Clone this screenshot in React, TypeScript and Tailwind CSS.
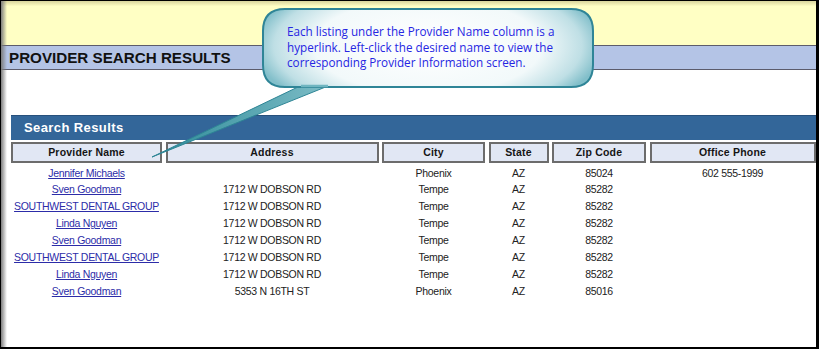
const rows = [
  { name: 'Jennifer Michaels', address: '', city: 'Phoenix', state: 'AZ', zip: '85024', phone: '602 555-1999' },
  { name: 'Sven Goodman', address: '1712 W DOBSON RD', city: 'Tempe', state: 'AZ', zip: '85282', phone: '' },
  { name: 'SOUTHWEST DENTAL GROUP', address: '1712 W DOBSON RD', city: 'Tempe', state: 'AZ', zip: '85282', phone: '' },
  { name: 'Linda Nguyen', address: '1712 W DOBSON RD', city: 'Tempe', state: 'AZ', zip: '85282', phone: '' },
  { name: 'Sven Goodman', address: '1712 W DOBSON RD', city: 'Tempe', state: 'AZ', zip: '85282', phone: '' },
  { name: 'SOUTHWEST DENTAL GROUP', address: '1712 W DOBSON RD', city: 'Tempe', state: 'AZ', zip: '85282', phone: '' },
  { name: 'Linda Nguyen', address: '1712 W DOBSON RD', city: 'Tempe', state: 'AZ', zip: '85282', phone: '' },
  { name: 'Sven Goodman', address: '5353 N 16TH ST', city: 'Phoenix', state: 'AZ', zip: '85016', phone: '' },
]

const headers = ['Provider Name', 'Address', 'City', 'State', 'Zip Code', 'Office Phone']

const grid = 'grid grid-cols-[151px_213px_103px_60px_94px_166px] gap-x-[3.5px]'

export default function App() {
  return (
    <div
      className="relative w-[819px] h-[349px] bg-white border-black border-t border-l border-r-[3px] border-b-2 overflow-hidden flex flex-col"
      style={{ fontFamily: "'Liberation Sans', Arial, sans-serif" }}
    >
      {/* ── Yellow top band ── */}
      <div className="h-[44px] bg-linear-to-b from-[#d9d59c] from-0% to-[#ffffc4] to-12%" />

      {/* ── Page title ── */}
      <div className="h-[25px] border-y border-[#5c5c6c] bg-[#b4c4e6] flex items-center pl-[8px]">
        <h1 className="text-[15.2px] font-bold text-[#111] leading-none">PROVIDER SEARCH RESULTS</h1>
      </div>

      <div className="h-[45px]" />

      {/* ── Search results ── */}
      <div className="ml-[10px]">
        <div className="h-[25px] bg-[#336699] border-t border-[#27507c] flex items-center pl-[13px]">
          <span className="text-white font-bold text-[13px] tracking-[0.4px]">Search Results</span>
        </div>

        <div className={`${grid} mt-[2px]`}>
          {headers.map(h => (
            <div key={h} className="h-[21px] border-2 border-[#6c6c6c] bg-[#e1e7f4] flex items-center justify-center">
              <span className="text-[10.5px] font-bold text-[#151515] tracking-[0.2px] whitespace-nowrap">{h}</span>
            </div>
          ))}
        </div>

        <div className="mt-[2px]">
          {rows.map((r, i) => (
            <div key={i} className={`${grid} h-[16.9px] items-center text-[10.5px] text-[#222] tracking-[-0.3px] whitespace-nowrap`}>
              <div className="text-center">
                <a href="#" className="text-[#2c2ca8] underline">{r.name}</a>
              </div>
              <div className="text-center">{r.address}</div>
              <div className="text-center">{r.city}</div>
              <div className="text-center">{r.state}</div>
              <div className="text-center">{r.zip}</div>
              <div className="text-center">{r.phone}</div>
            </div>
          ))}
        </div>
      </div>

      {/* left edge shadow */}
      <div className="absolute left-0 top-0 bottom-0 w-[6px] bg-linear-to-r from-[#7d7d7d] to-transparent pointer-events-none" />

      {/* ── Callout ── */}
      <svg className="absolute left-[-1px] top-[-1px] pointer-events-none" width="819" height="349">
        <defs>
          <radialGradient
            id="bubble"
            gradientUnits="userSpaceOnUse"
            cx="428"
            cy="46"
            r="175"
            gradientTransform="translate(428 46) scale(1 0.42) translate(-428 -46)"
          >
            <stop offset="0" stopColor="#ffffff" />
            <stop offset="0.65" stopColor="#f2f9fa" />
            <stop offset="0.88" stopColor="#bfdfe5" />
            <stop offset="1" stopColor="#82bfca" />
          </radialGradient>
          <linearGradient id="tail" x1="0" y1="0" x2="1" y2="0">
            <stop offset="0" stopColor="#2d8a98" />
            <stop offset="1" stopColor="#7cbcc6" />
          </linearGradient>
        </defs>
        <path d="M300 86 L152 157 L328 86 Z" fill="url(#tail)" stroke="#2e8595" strokeWidth="1" />
        <path
          d="M285 9 H571 Q593 9 593 31 V65 Q593 87 571 87 H285 Q263 87 263 65 V31 Q263 9 285 9 Z"
          fill="url(#bubble)"
          stroke="#2f8597"
          strokeWidth="2"
        />
        <path d="M301 86 L328 86" stroke="#6fb5c0" strokeWidth="2.5" />
      </svg>
      <div
        className="absolute left-[286px] top-[23px] w-[295px] text-[11.7px] leading-[15.5px] text-[#2626e2]"
        style={{ fontFamily: "'Open Sans', sans-serif" }}
      >
        Each listing under the Provider Name column is a hyperlink. Left-click the desired name to view the corresponding Provider Information screen.
      </div>
    </div>
  )
}
